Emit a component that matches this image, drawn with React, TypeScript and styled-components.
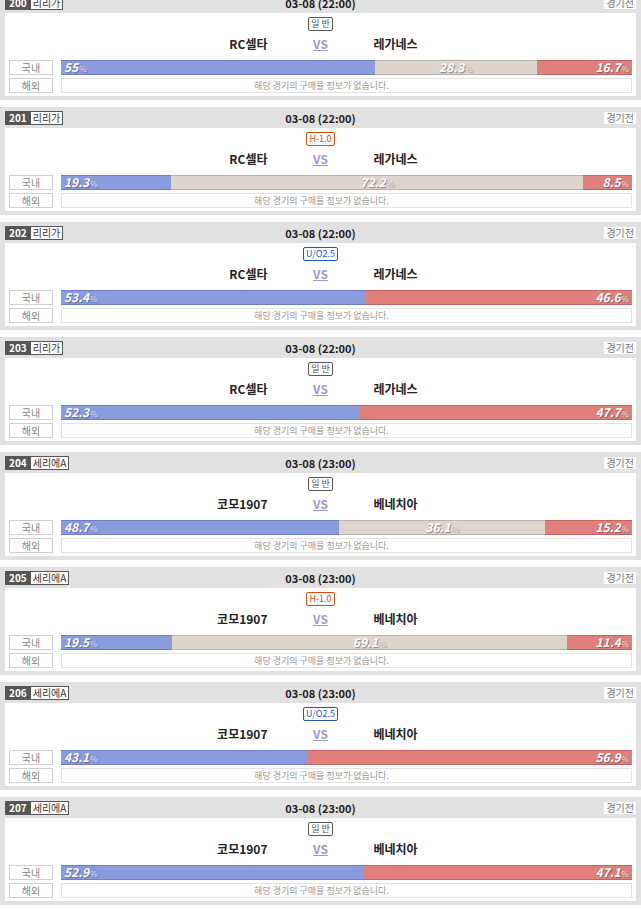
import styled, { createGlobalStyle } from "styled-components";

const GlobalStyle = createGlobalStyle`
  body {
    margin: 0;
    background: #fff;
    font-family: "Noto Sans CJK KR", "Noto Sans", sans-serif;
    overflow: hidden;
  }
`;

const List = styled.div`
  display: flex;
  flex-direction: column;
  gap: 7px;
  margin-top: -8px;
`;

const Card = styled.div`
  background: #e1e1e1;
  padding: 0 5px 4px;
`;

const Header = styled.div`
  height: 21px;
  display: grid;
  grid-template-columns: 1fr auto 1fr;
  align-items: center;
`;

const League = styled.div`
  display: inline-flex;
  align-items: center;
  border: 1px solid #555;
  font-size: 10px;
  line-height: 12px;
  justify-self: start;
`;

const LeagueNo = styled.span`
  background: #555;
  color: #fff;
  font-weight: 700;
  padding: 0 4px 0 3px;
`;

const LeagueName = styled.span`
  background: #fff;
  color: #333;
  padding: 0 2px;
`;

const Date = styled.div`
  font-size: 11px;
  font-weight: 700;
  color: #222;
`;

const Status = styled.div`
  justify-self: end;
  background: #fff;
  color: #777;
  font-size: 10px;
  line-height: 12px;
  padding: 0 2px;
`;

const Panel = styled.div`
  background: #fff;
  height: 83px;
  box-sizing: border-box;
  padding: 4px 4px 3px;
`;

const TypeRow = styled.div`
  display: flex;
  justify-content: center;
  height: 14px;
`;

const typeColors: Record<string, string> = {
  normal: "#555",
  handicap: "#d2500c",
  under: "#1d5bb8",
};

const TypeBadge = styled.span<{ $kind: string }>`
  border: 1px solid ${(p) => typeColors[p.$kind]};
  border-radius: 2px;
  color: ${(p) => typeColors[p.$kind]};
  font-size: 9px;
  line-height: 12px;
  padding: 0 2px;
  background: #fff;
`;

const Teams = styled.div`
  display: grid;
  grid-template-columns: 1fr 106px 1fr;
  height: 24px;
  align-items: center;
  margin-bottom: 5px;
  font-size: 12px;
  font-weight: 700;
  color: #222;
`;

const Home = styled.div`
  text-align: right;
`;

const Away = styled.div`
  text-align: left;
`;

const Vs = styled.div`
  text-align: center;
  color: #a595cf;
  text-decoration: underline;
`;

const Row = styled.div`
  display: grid;
  grid-template-columns: 44px 1fr;
  gap: 8px;
  height: 15px;
  & + & {
    margin-top: 3px;
  }
`;

const RowLabel = styled.div`
  border: 1px solid #cfcfcf;
  background: #fff;
  color: #888;
  font-size: 10px;
  line-height: 13px;
  text-align: center;
`;

const Bar = styled.div`
  display: flex;
  height: 15px;
`;

const segColors = {
  home: ["#8a9cde", "#6b7fc4"],
  draw: ["#ddd6cf", "#b9b1a9"],
  away: ["#e0807c", "#c46460"],
};

const Segment = styled.div<{ $side: "home" | "draw" | "away" }>`
  box-sizing: border-box;
  background: ${(p) => segColors[p.$side][0]};
  border-top: 1px solid ${(p) => segColors[p.$side][1]};
  border-bottom: 1px solid ${(p) => segColors[p.$side][1]};
  display: flex;
  align-items: center;
  padding: 0 3px;
  justify-content: ${(p) =>
    p.$side === "home" ? "flex-start" : p.$side === "draw" ? "center" : "flex-end"};
  white-space: nowrap;
`;

const Value = styled.span`
  color: #fff;
  font-size: 12px;
  font-weight: 700;
  font-style: italic;
  text-shadow: 1px 1px 1px rgba(60, 60, 80, 0.55);
  line-height: 13px;
`;

const Pct = styled.small`
  font-size: 8px;
  font-style: normal;
  font-weight: 400;
  color: #e6e6ee;
  margin-left: 1px;
`;

const Empty = styled.div`
  border: 1px solid #e3e3e3;
  color: #999;
  font-size: 9px;
  line-height: 13px;
  text-align: center;
  padding-right: 50px;
`;

interface Match {
  no: number;
  league: string;
  time: string;
  type: "normal" | "handicap" | "under";
  typeText: string;
  home: string;
  away: string;
  rates: number[];
}

const celta = { league: "리리가", time: "03-08 (22:00)", home: "RC셀타", away: "레가네스" };
const como = { league: "세리에A", time: "03-08 (23:00)", home: "코모1907", away: "베네치아" };

const matches: Match[] = [
  { no: 200, ...celta, type: "normal", typeText: "일 반", rates: [55, 28.3, 16.7] },
  { no: 201, ...celta, type: "handicap", typeText: "H-1.0", rates: [19.3, 72.2, 8.5] },
  { no: 202, ...celta, type: "under", typeText: "U/O2.5", rates: [53.4, 46.6] },
  { no: 203, ...celta, type: "normal", typeText: "일 반", rates: [52.3, 47.7] },
  { no: 204, ...como, type: "normal", typeText: "일 반", rates: [48.7, 36.1, 15.2] },
  { no: 205, ...como, type: "handicap", typeText: "H-1.0", rates: [19.5, 69.1, 11.4] },
  { no: 206, ...como, type: "under", typeText: "U/O2.5", rates: [43.1, 56.9] },
  { no: 207, ...como, type: "normal", typeText: "일 반", rates: [52.9, 47.1] },
];

function RateBar({ rates }: { rates: number[] }) {
  const sides: ("home" | "draw" | "away")[] =
    rates.length === 3 ? ["home", "draw", "away"] : ["home", "away"];
  return (
    <Bar>
      {rates.map((r, i) => (
        <Segment key={i} $side={sides[i]} style={{ width: `${r}%` }}>
          <Value>
            {r}
            <Pct>%</Pct>
          </Value>
        </Segment>
      ))}
    </Bar>
  );
}

export default function App() {
  return (
    <>
      <GlobalStyle />
      <List>
        {matches.map((m) => (
          <Card key={m.no}>
            <Header>
              <League>
                <LeagueNo>{m.no}</LeagueNo>
                <LeagueName>{m.league}</LeagueName>
              </League>
              <Date>{m.time}</Date>
              <Status>경기전</Status>
            </Header>
            <Panel>
              <TypeRow>
                <TypeBadge $kind={m.type}>{m.typeText}</TypeBadge>
              </TypeRow>
              <Teams>
                <Home>{m.home}</Home>
                <Vs>VS</Vs>
                <Away>{m.away}</Away>
              </Teams>
              <Row>
                <RowLabel>국내</RowLabel>
                <RateBar rates={m.rates} />
              </Row>
              <Row>
                <RowLabel>해외</RowLabel>
                <Empty>해당 경기의 구매율 정보가 없습니다.</Empty>
              </Row>
            </Panel>
          </Card>
        ))}
      </List>
    </>
  );
}
